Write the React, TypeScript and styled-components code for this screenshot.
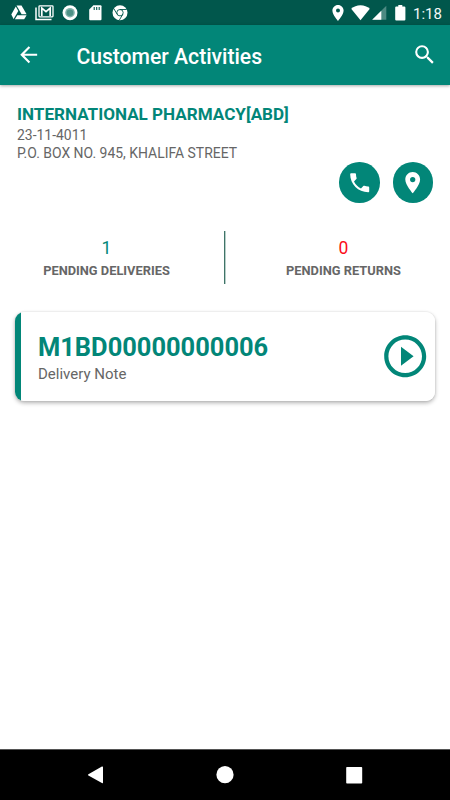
import React from "react";
import styled, { createGlobalStyle } from "styled-components";

const GREEN = "#028678";

const GlobalStyle = createGlobalStyle`
  * { box-sizing: border-box; }
  body {
    margin: 0;
    background: #fff;
    font-family: Roboto, "Liberation Sans", sans-serif;
  }
  svg { display: block; flex: none; }
`;

const Screen = styled.div`
  display: flex;
  flex-direction: column;
  width: 450px;
  height: 800px;
  background: #fff;
  overflow: hidden;
`;

const StatusBar = styled.div`
  display: flex;
  flex: none;
  justify-content: space-between;
  height: 25px;
  padding: 5px 8px 0 11px;
  background: #01574c;
`;

const StatusGroup = styled.div`
  display: flex;
  height: 16px;
`;

const StatusItem = styled.span<{ $before?: number }>`
  margin-left: ${(p) => p.$before ?? 0}px;
`;

const Clock = styled.span`
  margin-left: 7px;
  width: 29px;
  font-size: 15px;
  line-height: 18px;
  color: #f4f8f7;
  white-space: nowrap;
`;

const AppBar = styled.header`
  display: flex;
  flex: none;
  align-items: center;
  height: 60px;
  padding: 0 13px 0 16px;
  background: ${GREEN};
  box-shadow: 0 1px 3px rgba(0, 0, 0, 0.34);
`;

const IconButton = styled.button`
  display: flex;
  padding: 0;
  border: 0;
  background: none;
`;

const Title = styled.h1`
  flex: 1;
  margin: 3px 0 0 35px;
  font-size: 21.15px;
  font-weight: 500;
  line-height: 28px;
  color: #fff;
`;

const Main = styled.main`
  flex: 1;
`;

const Customer = styled.section`
  height: 77px;
  padding: 18px 17px 0;
`;

const CustomerName = styled.h2`
  margin: 0;
  font-size: 17.08px;
  font-weight: 700;
  line-height: 23px;
  color: ${GREEN};
`;

const CustomerLine = styled.p`
  margin: 0;
  font-size: 13.95px;
  line-height: 18px;
  color: #666;
`;

const Actions = styled.div`
  display: flex;
  justify-content: flex-end;
  gap: 13px;
  padding-right: 17px;
`;

const RoundButton = styled.button`
  display: flex;
  align-items: center;
  justify-content: center;
  width: 40.5px;
  height: 40.5px;
  padding: 0;
  border: 0;
  border-radius: 50%;
  background: ${GREEN};
`;

const Counts = styled.section`
  display: grid;
  grid-template-columns: 213px 2px 213px;
  column-gap: 11px;
  height: 53px;
  margin-top: 28px;
`;

const Count = styled.div`
  display: flex;
  flex-direction: column;
  align-items: center;
  padding-top: 6px;
`;

const CountValue = styled.span<{ $color: string }>`
  font-size: 17.5px;
  line-height: 22px;
  color: ${(p) => p.$color};
`;

const CountLabel = styled.span`
  margin-top: 3px;
  font-size: 12.85px;
  font-weight: 700;
  line-height: 18px;
  color: #666;
`;

const Divider = styled.div`
  background: #3f7468;
  border-right: 1px solid #b9cec9;
`;

const Card = styled.article`
  display: flex;
  align-items: center;
  justify-content: space-between;
  height: 89px;
  margin: 28px 15px 0;
  padding: 0 5px 0 17px;
  border-radius: 9px;
  background: linear-gradient(to right, ${GREEN} 6px, #fff 6px);
  box-shadow: 0 2px 4px rgba(0, 0, 0, 0.3), 0 0 2px rgba(0, 0, 0, 0.12);
`;

const CardText = styled.div`
  padding: 3px 0 0 6px;
`;

const NoteNumber = styled.div`
  font-size: 25.45px;
  font-weight: 700;
  line-height: 32px;
  color: ${GREEN};
`;

const NoteType = styled.div`
  font-size: 15px;
  line-height: 22px;
  color: #666;
`;

const NavBar = styled.nav`
  display: flex;
  flex: none;
  align-items: center;
  justify-content: space-between;
  height: 51px;
  padding: 0 87px;
  border-top: 1px solid #555;
  background: #000;
`;

type GlyphProps = { d: string; size?: number; color?: string };

const Glyph = ({ d, size = 25.4, color = "#fff" }: GlyphProps) => (
  <svg width={size} height={size} viewBox="0 0 24 24" fill={color}>
    <path d={d} />
  </svg>
);

const PIN =
  "M12 2C8.13 2 5 5.13 5 9c0 5.25 7 13 7 13s7-7.75 7-13c0-3.87-3.13-7-7-7zm0 9.5a2.5 2.5 0 0 1 0-5 2.5 2.5 0 0 1 0 5z";
const BACK = "M20 11H7.83l5.59-5.59L12 4l-8 8 8 8 1.41-1.41L7.83 13H20v-2z";
const SEARCH =
  "M15.5 14h-.79l-.28-.27A6.471 6.471 0 0 0 16 9.5 6.5 6.5 0 1 0 9.5 16c1.61 0 3.09-.59 4.23-1.57l.27.28v.79l5 4.99L20.49 19l-4.99-5zm-6 0C7.01 14 5 11.99 5 9.5S7.01 5 9.5 5 14 7.01 14 9.5 11.99 14 9.5 14z";
const PHONE =
  "M6.62 10.79c1.44 2.83 3.76 5.14 6.59 6.59l2.2-2.2c.27-.27.67-.36 1.02-.24 1.12.37 2.33.57 3.57.57.55 0 1 .45 1 1V20c0 .55-.45 1-1 1-9.39 0-17-7.61-17-17 0-.55.45-1 1-1h3.5c.55 0 1 .45 1 1 0 1.25.2 2.45.57 3.57.11.35.03.74-.25 1.02l-2.2 2.2z";
const PLAY =
  "M10 16.5l6-4.5-6-4.5v9zM12 2C6.48 2 2 6.48 2 12s4.48 10 10 10 10-4.48 10-10S17.52 2 12 2zm0 18c-4.41 0-8-3.59-8-8s3.59-8 8-8 8 3.59 8 8-3.59 8-8 8z";

const DriveIcon = () => (
  <svg width="16" height="15" viewBox="0 0 16 15" fill="#fff">
    <path d="M5.5 0.4h5l5.1 8.8h-5z" />
    <path d="M4.8 1.6l2.5 4.3-4.7 8.1L0.3 9.6z" />
    <path d="M6.3 10.2h9.3l-2.4 4H3.9z" />
  </svg>
);

const MailIcon = () => (
  <svg width="19" height="16" viewBox="0 0 19 16" fill="none" stroke="#fff">
    <path d="M1 2.5v12.1h15.5" strokeWidth="1.5" />
    <rect x="4" y="0.8" width="14" height="11" rx="0.8" strokeWidth="1.3" />
    <path d="M6.8 11V3l4.2 3.6L15.2 3v8" strokeWidth="1.7" />
  </svg>
);

const RecordIcon = () => (
  <svg width="16" height="16" viewBox="0 0 16 16">
    <circle cx="8" cy="7.7" r="7.5" fill="#fff" />
    <circle cx="8" cy="7.7" r="4.8" fill="#82b3ab" />
    <circle cx="8" cy="7.7" r="3.3" fill="#4d9186" />
  </svg>
);

const SdIcon = () => (
  <svg width="13" height="16" viewBox="0 0 13 16">
    <path d="M4.4 0.2h7.1q1 0 1 1v13q0 1-1 1H1.2q-1 0-1-1V4.5z" fill="#fff" />
    <path d="M5.2 2v3M7.7 2v3M10.2 2v3" stroke="#01574c" strokeWidth="1.1" />
  </svg>
);

const ChromeIcon = () => (
  <svg width="16" height="16" viewBox="0 0 16 16" fill="none">
    <circle cx="8" cy="7.7" r="7.5" fill="#fff" />
    <g stroke="#01574c" strokeWidth="0.9">
      <circle cx="8" cy="7.7" r="3.2" />
      <path d="M8 4.5h6.7M5.2 9.3L1.8 3.6M10.8 9.3L7.4 15" />
    </g>
  </svg>
);

const StatusPinIcon = () => (
  <svg width="12" height="16" viewBox="5 2 14 20" preserveAspectRatio="xMidYMin meet" fill="#fff">
    <path d={PIN} />
  </svg>
);

const WifiIcon = () => (
  <svg width="19" height="16" viewBox="0 0 19 16" fill="#fff">
    <path d="M9.5 15.3L0.2 3.7C2.7 1.5 5.9 0.2 9.5 0.2s6.8 1.3 9.3 3.5z" />
  </svg>
);

const SignalIcon = () => (
  <svg width="15" height="16" viewBox="0 0 15 16">
    <path d="M14.3 0.7v14.1H0.2z" fill="#4d8a82" />
    <path d="M9.3 5.7v9.1H0.2z" fill="#fff" />
  </svg>
);

const BatteryIcon = () => (
  <svg width="11" height="16" viewBox="0 0 11 16" fill="#fff">
    <path d="M3.3 0h4v1.4h2q1.1 0 1.1 1.1v12q0 1.1-1.1 1.1H1.3q-1.1 0-1.1-1.1v-12q0-1.1 1.1-1.1h2z" />
  </svg>
);

const BackTriangle = () => (
  <svg width="17" height="18" viewBox="0 0 17 18" fill="#fff">
    <path d="M1.4 8.2L14.9 0.6Q16 0.2 16 1.2v15.4q0 1-1.1.5L1.4 9.6q-1-.7 0-1.4z" />
  </svg>
);

const HomeCircle = () => (
  <svg width="18" height="18" viewBox="0 0 18 18" fill="#fff">
    <circle cx="9" cy="8.7" r="8.6" />
  </svg>
);

const RecentSquare = () => (
  <svg width="17" height="17" viewBox="0 0 17 17" fill="#fff">
    <rect x="0.2" y="0" width="16" height="16.5" rx="0.8" />
  </svg>
);

export default function App() {
  return (
    <Screen>
      <GlobalStyle />
      <StatusBar>
        <StatusGroup>
          <StatusItem>
            <DriveIcon />
          </StatusItem>
          <StatusItem $before={8}>
            <MailIcon />
          </StatusItem>
          <StatusItem $before={7.5}>
            <RecordIcon />
          </StatusItem>
          <StatusItem $before={11}>
            <SdIcon />
          </StatusItem>
          <StatusItem $before={10.5}>
            <ChromeIcon />
          </StatusItem>
        </StatusGroup>
        <StatusGroup>
          <StatusItem>
            <StatusPinIcon />
          </StatusItem>
          <StatusItem $before={6.5}>
            <WifiIcon />
          </StatusItem>
          <StatusItem $before={2.5}>
            <SignalIcon />
          </StatusItem>
          <StatusItem $before={8}>
            <BatteryIcon />
          </StatusItem>
          <Clock>1:18</Clock>
        </StatusGroup>
      </StatusBar>
      <AppBar>
        <IconButton aria-label="Back">
          <Glyph d={BACK} />
        </IconButton>
        <Title>Customer Activities</Title>
        <IconButton aria-label="Search">
          <Glyph d={SEARCH} />
        </IconButton>
      </AppBar>
      <Main>
        <Customer>
          <CustomerName>INTERNATIONAL PHARMACY[ABD]</CustomerName>
          <CustomerLine>23-11-4011</CustomerLine>
          <CustomerLine>P.O. BOX NO. 945, KHALIFA STREET</CustomerLine>
        </Customer>
        <Actions>
          <RoundButton aria-label="Call">
            <Glyph d={PHONE} />
          </RoundButton>
          <RoundButton aria-label="Location">
            <Glyph d={PIN} />
          </RoundButton>
        </Actions>
        <Counts>
          <Count>
            <CountValue $color={GREEN}>1</CountValue>
            <CountLabel>PENDING DELIVERIES</CountLabel>
          </Count>
          <Divider />
          <Count>
            <CountValue $color="#fb0d1b">0</CountValue>
            <CountLabel>PENDING RETURNS</CountLabel>
          </Count>
        </Counts>
        <Card>
          <CardText>
            <NoteNumber>M1BD00000000006</NoteNumber>
            <NoteType>Delivery Note</NoteType>
          </CardText>
          <IconButton aria-label="Open delivery note">
            <Glyph d={PLAY} size={50.4} color={GREEN} />
          </IconButton>
        </Card>
      </Main>
      <NavBar>
        <BackTriangle />
        <HomeCircle />
        <RecentSquare />
      </NavBar>
    </Screen>
  );
}
